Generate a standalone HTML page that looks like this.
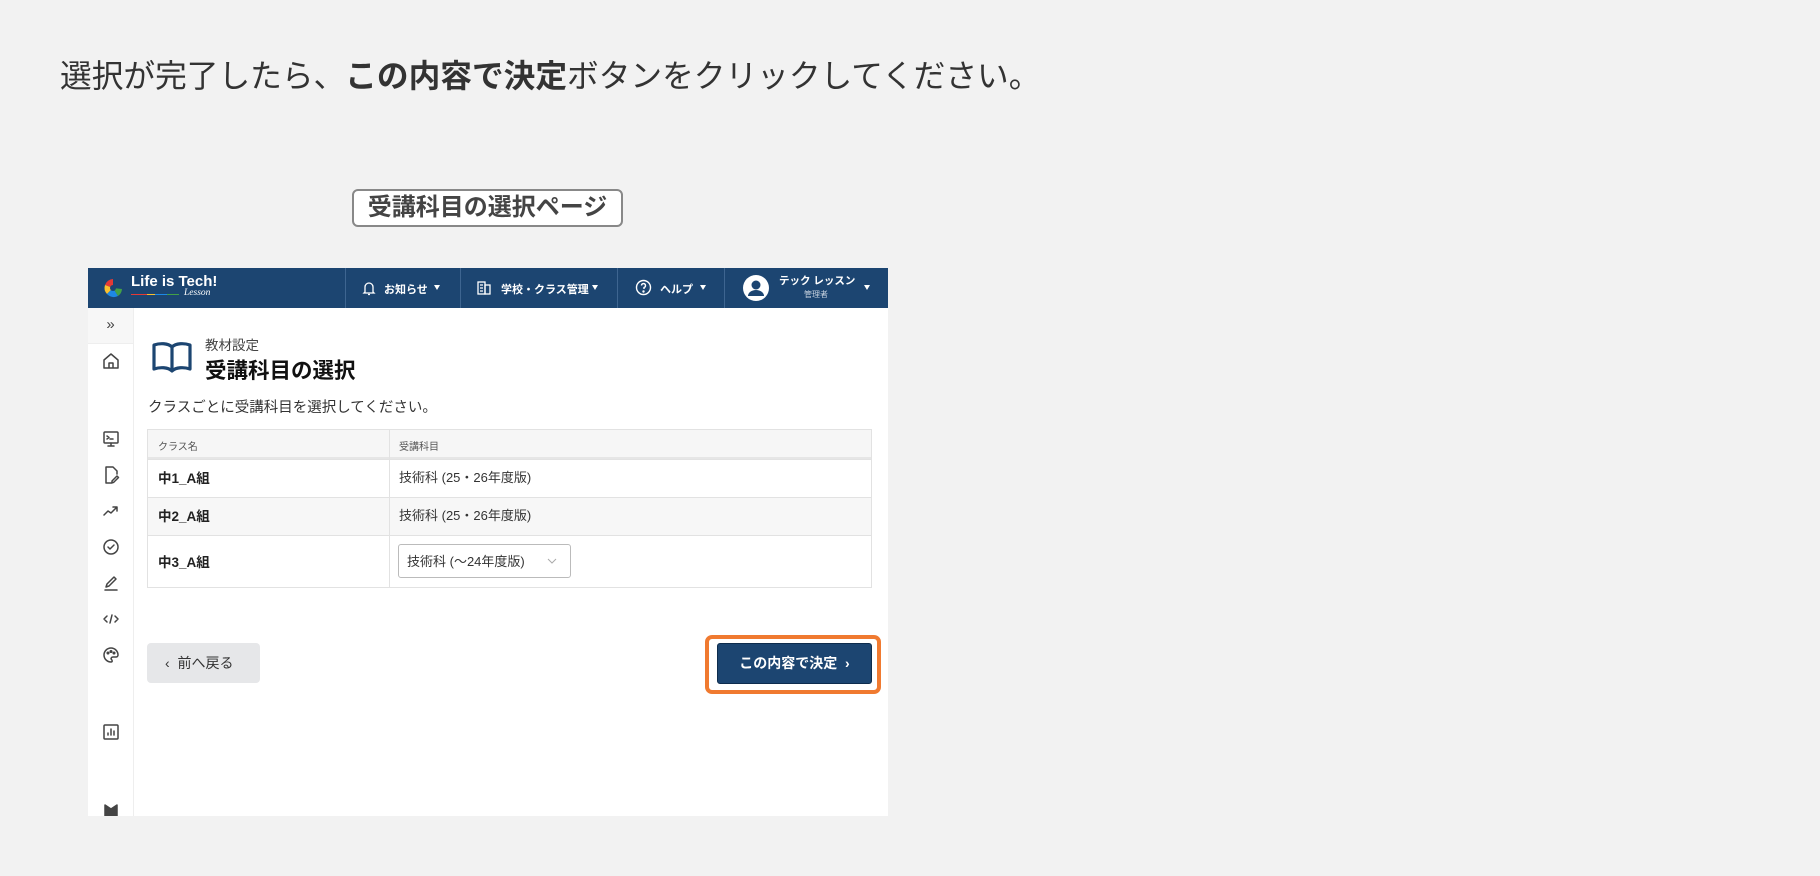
<!DOCTYPE html>
<html><head><meta charset="utf-8">
<style>
*{margin:0;padding:0;box-sizing:border-box}
body{width:1820px;height:876px;background:#f2f2f2;font-family:"Liberation Sans","Noto Sans CJK JP",sans-serif;position:relative;overflow:hidden;color:#333}
.a{position:absolute}
.title{left:60px;top:57px;font-size:31.7px;color:#333;white-space:nowrap;line-height:38px}
.title b{font-weight:700}
.label{left:352px;top:189px;width:271px;height:38px;border:2px solid #888;border-radius:6px;background:#fff;font-size:24px;font-weight:700;color:#444;text-align:center;line-height:34px}
.scr{left:88px;top:268px;width:800px;height:548px;background:#fff;overflow:hidden}
.nav{left:0;top:0;width:800px;height:40px;background:#1c4571}
.dv{top:0;width:1px;height:40px;background:#3e6590}
.nt{color:#fff;font-size:11px;font-weight:700;top:13px;white-space:nowrap}
.car{top:17px;width:0;height:0;border-left:3.5px solid transparent;border-right:3.5px solid transparent;border-top:5px solid #fff}
.side{left:0;top:40px;width:46px;height:508px;background:#fff;border-right:1px solid #eee}
.ic{left:11px;width:24px;height:24px}
svg.ic{fill:none;stroke:#444;stroke-width:1.5;stroke-linecap:round;stroke-linejoin:round}
.tb{left:59px;top:161px;width:725px;height:159px;border:1px solid #e2e2e2}
.row{left:0;width:723px;border-top:1px solid #e2e2e2}
.c1{left:10px;font-size:13.5px;font-weight:700;color:#222}
.c2{left:251px;font-size:13px;color:#333}
</style></head><body>
<div class="a title">選択が完了したら、<b>この内容で決定</b>ボタンをクリックしてください。</div>
<div class="a label">受講科目の選択ページ</div>

<div class="a scr">
 <div class="a nav">
  <svg class="a" style="left:14px;top:9px" width="22" height="22" viewBox="0 0 22 22">
   <path d="M11 2 A9 9 0 0 0 3 8 L11 11Z" fill="#e53935"/>
   <path d="M3 8 A9 9 0 0 0 5 17 L11 11Z" fill="#fbc02d"/>
   <path d="M5 17 A9 9 0 0 0 16 19 L11 11Z" fill="#1e88e5"/>
   <path d="M16 19 A9 9 0 0 0 20 12 L11 11Z" fill="#43a047"/>
   <circle cx="11" cy="11" r="3" fill="#1c4571"/>
  </svg>
  <div class="a" style="left:43px;top:5px;color:#fff;font-size:15px;font-weight:700">Life is Tech!</div>
  <div class="a" style="left:43px;top:26px;width:48px;height:1px;background:linear-gradient(90deg,#e53935 0 33%,#fbc02d 33% 50%,#1e88e5 50% 75%,#43a047 75%)"></div>
  <div class="a" style="left:96px;top:20px;color:#fff;font-size:9.5px;font-style:italic;font-family:'Liberation Serif',serif">Lesson</div>
  <div class="a dv" style="left:257px"></div>
  <div class="a dv" style="left:372px"></div>
  <div class="a dv" style="left:529px"></div>
  <div class="a dv" style="left:636px"></div>
  <svg class="a" style="left:274px;top:13px" width="14" height="15" viewBox="0 0 14 15" fill="none" stroke="#fff" stroke-width="1.3"><path d="M3 11V6a4 4 0 0 1 8 0v5l1 1H2z M6 13.5h2"/></svg>
  <div class="a nt" style="left:296px">お知らせ</div><div class="a car" style="left:346px"></div>
  <svg class="a" style="left:388px;top:12px" width="16" height="16" viewBox="0 0 16 16" fill="none" stroke="#fff" stroke-width="1.3"><rect x="2" y="2" width="7" height="12"/><rect x="9" y="5" width="5" height="9"/><path d="M4 5h3M4 8h3M4 11h3"/></svg>
  <div class="a nt" style="left:413px">学校・クラス管理</div><div class="a car" style="left:504px"></div>
  <svg class="a" style="left:547px;top:11px" width="17" height="17" viewBox="0 0 17 17" fill="none" stroke="#fff" stroke-width="1.4"><circle cx="8.5" cy="8.5" r="7"/><path d="M6.5 6.5a2 2 0 1 1 2.5 2v1.5"/><circle cx="8.5" cy="12.5" r=".5" fill="#fff"/></svg>
  <div class="a nt" style="left:572px">ヘルプ</div><div class="a car" style="left:612px"></div>
  <svg class="a" style="left:655px;top:7px" width="26" height="26" viewBox="0 0 26 26"><circle cx="13" cy="13" r="13" fill="#fff"/><circle cx="13" cy="10" r="4.5" fill="#1c4571"/><path d="M5 21a8 6 0 0 1 16 0z" fill="#1c4571"/></svg>
  <div class="a" style="left:691px;top:5px;color:#fff;font-size:10.5px;font-weight:700;white-space:nowrap">テック レッスン</div>
  <div class="a" style="left:716px;top:21px;color:#c8d3e0;font-size:8px">管理者</div>
  <div class="a car" style="left:776px"></div>
 </div>

 <div class="a side">
  <div class="a" style="left:0;top:0;width:45px;height:36px;background:#f7f7f7;border-bottom:1px solid #eee;text-align:center;line-height:34px;font-size:15px;color:#444">»</div>
 </div>
 <svg class="a ic" style="top:81px" viewBox="0 0 24 24"><path d="M5 11l7-6 7 6v8H5z M10 19v-5h4v5"/></svg>
 <svg class="a ic" style="top:159px" viewBox="0 0 24 24"><rect x="5" y="5" width="14" height="11" rx="1"/><path d="M8 9l2 1.5L8 12 M11 12h3 M12 16v3 M9 19h6"/></svg>
 <svg class="a ic" style="top:195px" viewBox="0 0 24 24"><path d="M14 4H7v16h6 M14 4l4 4v3 M13 18l5-5 1.5 1.5-5 5H13z"/></svg>
 <svg class="a ic" style="top:231px" viewBox="0 0 24 24"><path d="M5 16l4-4 3 2 6-6 M14 8h4v4"/></svg>
 <svg class="a ic" style="top:267px" viewBox="0 0 24 24"><circle cx="12" cy="12" r="7"/><path d="M9 12l2 2 4-4"/></svg>
 <svg class="a ic" style="top:303px" viewBox="0 0 24 24"><path d="M7 16l1-3 7-7 2 2-7 7z M6 19h12"/></svg>
 <svg class="a ic" style="top:339px" viewBox="0 0 24 24"><path d="M8 9l-3 3 3 3 M16 9l3 3-3 3 M13 8l-2 8"/></svg>
 <svg class="a ic" style="top:375px" viewBox="0 0 24 24"><path d="M12 5a7 7 0 0 0 0 14c1.5 0 1.5-1.5 .5-2.5s0-2.5 1.5-2.5h3a2 2 0 0 0 2-2A7 7 0 0 0 12 5z"/><circle cx="9" cy="10" r=".8"/><circle cx="12" cy="8.5" r=".8"/><circle cx="15" cy="10" r=".8"/></svg>
 <svg class="a ic" style="top:452px" viewBox="0 0 24 24"><rect x="5" y="5" width="14" height="14" rx="1"/><path d="M9 15v-2 M12 15V9 M15 15v-4"/></svg>
 <svg class="a ic" style="top:529px" viewBox="0 0 24 24"><path d="M6 8l6 4 6-4v12H6z" fill="#444"/></svg>

 <svg class="a" style="left:63px;top:72px" width="42" height="34" viewBox="0 0 42 34" fill="none" stroke="#1c4571" stroke-width="3.2" stroke-linejoin="round"><path d="M21 7C17 3 9 3 3 5v24c6-2 14-2 18 2 4-4 12-4 18-2V5c-6-2-14-2-18 2z M21 7v24"/></svg>
 <div class="a" style="left:117px;top:66px;font-size:13.5px;color:#444">教材設定</div>
 <div class="a" style="left:117px;top:86px;font-size:21.5px;font-weight:700;color:#111">受講科目の選択</div>
 <div class="a" style="left:60px;top:128px;font-size:14.5px;color:#333">クラスごとに受講科目を選択してください。</div>

 <div class="a tb">
  <div class="a" style="left:0;top:0;width:723px;height:29px;background:#f6f6f6;border-bottom:2px solid #e6e6e6"></div>
  <div class="a" style="left:10px;top:8px;font-size:10px;color:#555">クラス名</div>
  <div class="a" style="left:251px;top:8px;font-size:10px;color:#555">受講科目</div>
  <div class="a row" style="top:29px;height:39px"></div>
  <div class="a row" style="top:67px;height:39px;background:#f7f7f7"></div>
  <div class="a row" style="top:105px;height:52px"></div>
  <div class="a" style="left:241px;top:0;width:1px;height:157px;background:#e2e2e2"></div>
  <div class="a c1" style="top:37px">中1_A組</div>
  <div class="a c2" style="top:37px">技術科 (25・26年度版)</div>
  <div class="a c1" style="top:75px">中2_A組</div>
  <div class="a c2" style="top:75px">技術科 (25・26年度版)</div>
  <div class="a c1" style="top:121px">中3_A組</div>
  <div class="a" style="left:250px;top:114px;width:173px;height:34px;border:1px solid #bbb;border-radius:3px;background:#fff"></div>
  <div class="a c2" style="left:259px;top:121px">技術科 (〜24年度版)</div>
  <svg class="a" style="left:399px;top:128px" width="10" height="7" viewBox="0 0 10 7" fill="none" stroke="#aaa" stroke-width="1"><path d="M1 1l4 4 4-4"/></svg>
 </div>

 <div class="a" style="left:59px;top:375px;width:113px;height:40px;background:#e6e7e9;border-radius:4px;font-size:14px;color:#333;line-height:40px;padding-left:18px">‹&nbsp;&nbsp;前へ戻る</div>
 <div class="a" style="left:617px;top:367px;width:176px;height:59px;border:4px solid #f07a30;border-radius:7px"></div>
 <div class="a" style="left:629px;top:375px;width:155px;height:41px;background:#1c4571;border:1px solid #0e2c4d;border-radius:3px;color:#fff;font-size:14px;font-weight:700;line-height:39px;text-align:center">この内容で決定&nbsp;&nbsp;›</div>
</div>
</body></html>
